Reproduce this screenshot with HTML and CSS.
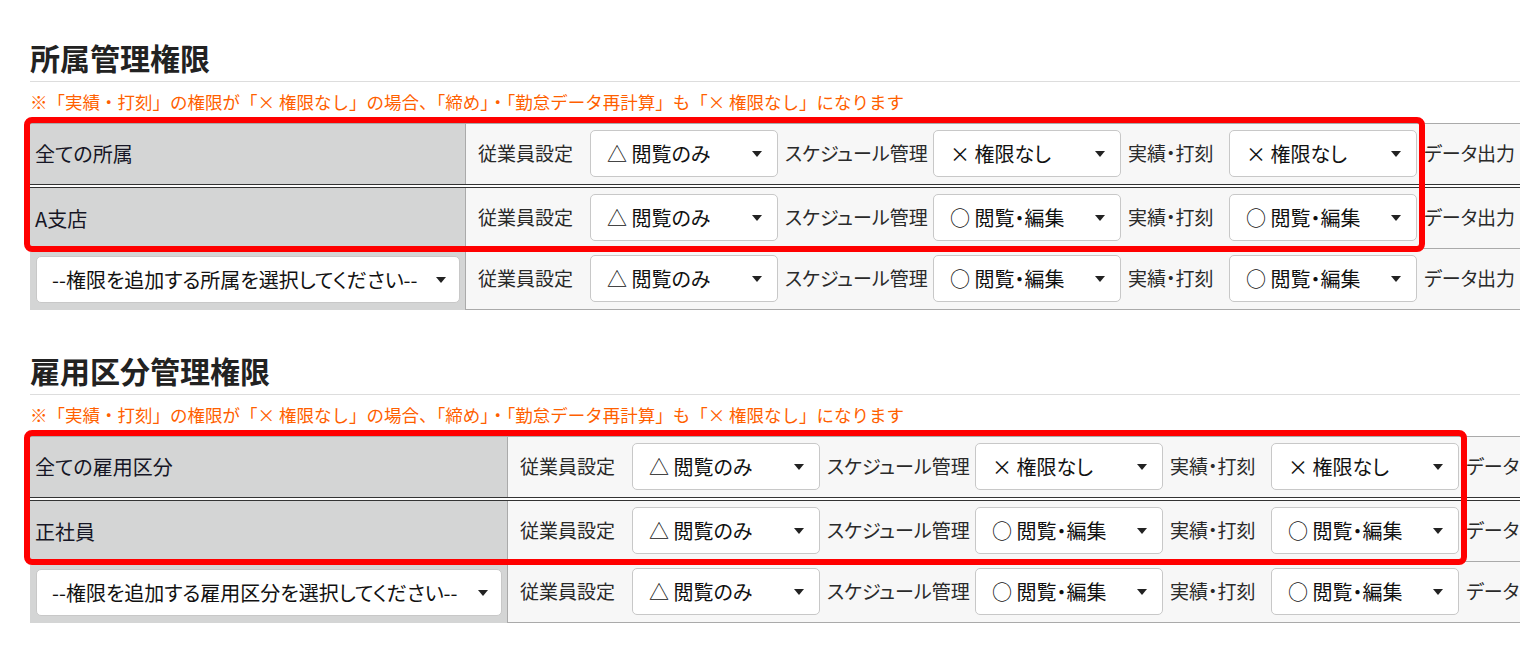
FILE: index.html
```html
<!DOCTYPE html>
<html lang="ja">
<head>
<meta charset="utf-8">
<title>権限設定</title>
<link rel="stylesheet" href="styles.css">
</head>
<body>
<div class="page">

  <section class="perm-section">
    <h2 class="perm-title">所属管理権限</h2>
    <p class="perm-note">※「実績・打刻」の権限が「× 権限なし」の場合、「締め」・「勤怠データ再計算」も「× 権限なし」になります</p>
    <div class="perm-list perm-list--dept">
      <div class="perm-row perm-row--all">
        <div class="perm-name">全ての所属</div>
        <div class="perm-controls">
          <span class="field-label">従業員設定</span>
          <div class="select"><span class="select__value">△ 閲覧のみ</span><svg class="select__arrow" viewBox="0 0 10 6"><polygon points="0,0 10,0 5,6"/></svg></div>
          <span class="field-label">スケジュール管理</span>
          <div class="select"><span class="select__value">× 権限なし</span><svg class="select__arrow" viewBox="0 0 10 6"><polygon points="0,0 10,0 5,6"/></svg></div>
          <span class="field-label">実績・打刻</span>
          <div class="select"><span class="select__value">× 権限なし</span><svg class="select__arrow" viewBox="0 0 10 6"><polygon points="0,0 10,0 5,6"/></svg></div>
          <span class="field-label">データ出力</span>
        </div>
      </div>
      <div class="perm-row">
        <div class="perm-name">A支店</div>
        <div class="perm-controls">
          <span class="field-label">従業員設定</span>
          <div class="select"><span class="select__value">△ 閲覧のみ</span><svg class="select__arrow" viewBox="0 0 10 6"><polygon points="0,0 10,0 5,6"/></svg></div>
          <span class="field-label">スケジュール管理</span>
          <div class="select"><span class="select__value">○ 閲覧・編集</span><svg class="select__arrow" viewBox="0 0 10 6"><polygon points="0,0 10,0 5,6"/></svg></div>
          <span class="field-label">実績・打刻</span>
          <div class="select"><span class="select__value">○ 閲覧・編集</span><svg class="select__arrow" viewBox="0 0 10 6"><polygon points="0,0 10,0 5,6"/></svg></div>
          <span class="field-label">データ出力</span>
        </div>
      </div>
      <div class="perm-row perm-row--add">
        <div class="perm-name">
          <div class="select select--wide"><span class="select__value">--権限を追加する所属を選択してください--</span><svg class="select__arrow" viewBox="0 0 10 6"><polygon points="0,0 10,0 5,6"/></svg></div>
        </div>
        <div class="perm-controls">
          <span class="field-label">従業員設定</span>
          <div class="select"><span class="select__value">△ 閲覧のみ</span><svg class="select__arrow" viewBox="0 0 10 6"><polygon points="0,0 10,0 5,6"/></svg></div>
          <span class="field-label">スケジュール管理</span>
          <div class="select"><span class="select__value">○ 閲覧・編集</span><svg class="select__arrow" viewBox="0 0 10 6"><polygon points="0,0 10,0 5,6"/></svg></div>
          <span class="field-label">実績・打刻</span>
          <div class="select"><span class="select__value">○ 閲覧・編集</span><svg class="select__arrow" viewBox="0 0 10 6"><polygon points="0,0 10,0 5,6"/></svg></div>
          <span class="field-label">データ出力</span>
        </div>
      </div>
      <div class="highlight highlight--dept"></div>
    </div>
  </section>

  <section class="perm-section">
    <h2 class="perm-title">雇用区分管理権限</h2>
    <p class="perm-note">※「実績・打刻」の権限が「× 権限なし」の場合、「締め」・「勤怠データ再計算」も「× 権限なし」になります</p>
    <div class="perm-list perm-list--emp">
      <div class="perm-row perm-row--all">
        <div class="perm-name">全ての雇用区分</div>
        <div class="perm-controls">
          <span class="field-label">従業員設定</span>
          <div class="select"><span class="select__value">△ 閲覧のみ</span><svg class="select__arrow" viewBox="0 0 10 6"><polygon points="0,0 10,0 5,6"/></svg></div>
          <span class="field-label">スケジュール管理</span>
          <div class="select"><span class="select__value">× 権限なし</span><svg class="select__arrow" viewBox="0 0 10 6"><polygon points="0,0 10,0 5,6"/></svg></div>
          <span class="field-label">実績・打刻</span>
          <div class="select"><span class="select__value">× 権限なし</span><svg class="select__arrow" viewBox="0 0 10 6"><polygon points="0,0 10,0 5,6"/></svg></div>
          <span class="field-label">データ出力</span>
        </div>
      </div>
      <div class="perm-row">
        <div class="perm-name">正社員</div>
        <div class="perm-controls">
          <span class="field-label">従業員設定</span>
          <div class="select"><span class="select__value">△ 閲覧のみ</span><svg class="select__arrow" viewBox="0 0 10 6"><polygon points="0,0 10,0 5,6"/></svg></div>
          <span class="field-label">スケジュール管理</span>
          <div class="select"><span class="select__value">○ 閲覧・編集</span><svg class="select__arrow" viewBox="0 0 10 6"><polygon points="0,0 10,0 5,6"/></svg></div>
          <span class="field-label">実績・打刻</span>
          <div class="select"><span class="select__value">○ 閲覧・編集</span><svg class="select__arrow" viewBox="0 0 10 6"><polygon points="0,0 10,0 5,6"/></svg></div>
          <span class="field-label">データ出力</span>
        </div>
      </div>
      <div class="perm-row perm-row--add">
        <div class="perm-name">
          <div class="select select--wide"><span class="select__value">--権限を追加する雇用区分を選択してください--</span><svg class="select__arrow" viewBox="0 0 10 6"><polygon points="0,0 10,0 5,6"/></svg></div>
        </div>
        <div class="perm-controls">
          <span class="field-label">従業員設定</span>
          <div class="select"><span class="select__value">△ 閲覧のみ</span><svg class="select__arrow" viewBox="0 0 10 6"><polygon points="0,0 10,0 5,6"/></svg></div>
          <span class="field-label">スケジュール管理</span>
          <div class="select"><span class="select__value">○ 閲覧・編集</span><svg class="select__arrow" viewBox="0 0 10 6"><polygon points="0,0 10,0 5,6"/></svg></div>
          <span class="field-label">実績・打刻</span>
          <div class="select"><span class="select__value">○ 閲覧・編集</span><svg class="select__arrow" viewBox="0 0 10 6"><polygon points="0,0 10,0 5,6"/></svg></div>
          <span class="field-label">データ出力</span>
        </div>
      </div>
      <div class="highlight highlight--emp"></div>
    </div>
  </section>

</div>
</body>
</html>
```

FILE: styles.css
```css
html {
  overflow: hidden;
}

body {
  margin: 0;
  background: #fff;
  color: #1a1a1a;
  font-family: "Noto Sans CJK JP", "Noto Sans", sans-serif;
  font-size: 20px;
  line-height: 1.4;
  font-feature-settings: "palt";
}

.page {
  padding-left: 30px;
}

.perm-section {
  padding-top: 39px;
  padding-bottom: 3px;
}

.perm-title {
  margin: 0;
  padding-bottom: 6px;
  border-bottom: 1px solid #ddd;
  font-size: 30px;
  line-height: 36px;
  font-weight: 700;
  color: #222;
  font-feature-settings: normal;
}

.perm-note {
  margin: 8px 0 9px;
  font-size: 17.5px;
  line-height: 24px;
  color: #ff5f00;
  white-space: nowrap;
  font-feature-settings: normal;
}

.perm-list {
  position: relative;
}

.perm-row {
  display: flex;
  width: max-content;
  white-space: nowrap;
}

.perm-row--all {
  border-top: 1px solid #aaa;
  border-bottom: 4px double #333;
}

.perm-name {
  box-sizing: border-box;
  display: flex;
  align-items: center;
  padding: 0 5px;
  background: #d4d5d5;
  border-right: 1px solid #aaa;
  color: #161625;
}

.perm-row--add .perm-name {
  padding: 0 5px 0 6px;
}

.perm-list--dept .perm-name {
  width: 436px;
}

.perm-list--emp .perm-name {
  width: 478px;
}

.perm-controls {
  display: grid;
  grid-template-columns: 112px 188px 155px 188px 108px 188px 140px;
  align-items: center;
  padding: 6px 12px 7px;
  background: #f7f7f7;
}

.perm-row:not(.perm-row--all) .perm-controls {
  border-bottom: 1px solid #aaa;
}

.field-label {
  padding-left: 7px;
  font-size: 19px;
  color: #2a2a2a;
}

.field-label:first-child {
  padding-left: 0;
}

.select {
  box-sizing: border-box;
  display: flex;
  align-items: center;
  justify-content: space-between;
  height: 47px;
  padding: 0 15px 0 16px;
  background: #fff;
  border: 1px solid #c8c8c8;
  border-radius: 5px;
  color: #111;
}

.select--wide {
  width: 100%;
  padding: 0 13px 0 15px;
}

.select__value {
  overflow: hidden;
}

.select__arrow {
  flex: none;
  width: 10px;
  height: 6px;
  fill: #222;
}

.highlight {
  position: absolute;
  left: -6px;
  top: -6px;
  height: 135px;
  box-sizing: border-box;
  border: 6px solid #ff0000;
  border-radius: 8px;
  pointer-events: none;
}

.highlight--dept {
  width: 1401px;
}

.highlight--emp {
  width: 1443px;
}
```
